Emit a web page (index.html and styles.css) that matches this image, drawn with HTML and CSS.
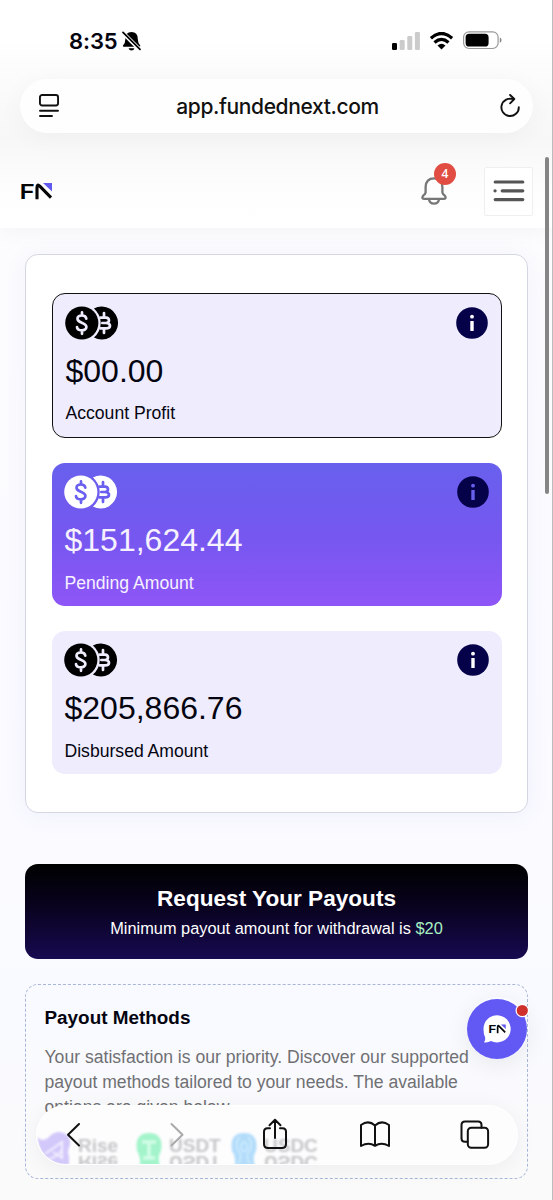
FILE: index.html
```html
<!DOCTYPE html>
<html lang="en">
<head>
<meta charset="utf-8">
<title>FundedNext Payouts</title>
<link rel="stylesheet" href="styles.css">
</head>
<body>
<svg class="defs" width="0" height="0" aria-hidden="true">
  <symbol id="coins" viewBox="0 0 54 34">
    <path d="M28.9 2.4A16.5 16.5 0 1 1 28.9 31.6A19 19 0 0 0 28.9 2.4Z" fill="currentColor"/>
    <circle cx="16.8" cy="17" r="16.6" fill="currentColor"/>
    <path d="M21.3 12.6C20.8 8.5 12.6 8.4 12.5 12.7C12.4 17.3 21.4 16 21.4 21C21.4 25.5 12.2 25.3 12 21M17 6.4V9.5M17 24.5V27.8" class="coin-line"/>
    <path d="M35.5 11.6H41Q44 11.8 44 14.3Q44 17 41 17H37.3M41 17Q45 17.2 45 19.8Q45 22.4 41 22.4H35.5M39 7V11M39 23V27" class="coin-line"/>
  </symbol>
  <symbol id="info" viewBox="0 0 32 32">
    <circle cx="16" cy="16" r="15.8" fill="#06024a"/>
    <circle cx="16" cy="9.7" r="1.9" fill="currentColor"/>
    <rect x="14.3" y="14" width="3.4" height="10" rx=".6" fill="currentColor"/>
  </symbol>
</svg>
<div class="screen">
  <div class="chrome">
    <div class="status">
      <span class="time">8:35</span>
      <svg class="mute" viewBox="0 0 20 20"><path d="M9.5 1Q15.8 1 15.8 8Q15.8 12 18.3 14.5Q18.6 15.8 17 15.8H2Q.4 15.8 1 14.4Q3.4 12 3.4 8Q3.3 1 9.5 1ZM6.6 17.2H12.4Q11.8 19.4 9.5 19.4T6.6 17.2Z"/><path d="M0 .9 18.5 19.4" stroke="#fff" stroke-width="4"/><path d="M1 1.4 18 18.4" stroke="#000" stroke-width="1.7" stroke-linecap="round"/></svg>
      <svg class="signal" viewBox="0 0 28 18"><rect y="11" width="5" height="7" rx="1.3"/><g fill="#cbcbcb"><rect x="7.7" y="8" width="5" height="10" rx="1.3"/><rect x="15.3" y="4" width="5" height="14" rx="1.3"/><rect x="22.9" width="5" height="18" rx="1.3"/></g></svg>
      <svg class="wifi" viewBox="0 0 24 18"><path d="M1.4 6.2Q12-3.2 22.6 6.2M5 10.4Q12 4.4 19 10.4" fill="none" stroke="#000" stroke-width="3.3"/><path d="M8 13.4Q12 10.2 16 13.4L12 17.6Z"/></svg>
      <svg class="battery" viewBox="0 0 39 19"><rect x=".6" y=".8" width="34.5" height="16.7" rx="5.4" fill="none" stroke="#999" stroke-width="1.2"/><rect x="2.6" y="2.8" width="23" height="12.7" rx="3.6"/><path d="M36.8 6.4Q38.6 7 38.6 9.1T36.8 12Z" fill="#888"/></svg>
    </div>
    <div class="address">
      <svg class="reader" viewBox="0 0 20 24"><g fill="none" stroke="#111" stroke-width="1.9" stroke-linecap="round"><rect x=".95" y="1" width="18.1" height="10.5" rx="2.2"/><path d="M1 16.7H19M1 22H13"/></g></svg>
      <span class="host">app.fundednext.com</span>
      <svg class="reload" viewBox="0 0 20 24"><path d="M13.4 5.3A8.7 8.7 0 1 0 18.8 13.2M9.5 4.9H14.2M10.1 1 14.3 5 10.1 9.3" fill="none" stroke="#111" stroke-width="1.9" stroke-linecap="round" stroke-linejoin="round"/></svg>
    </div>
    <div class="appbar">
      <svg class="brand" viewBox="0 0 32 17"><text class="logo-f" transform="translate(-1.5 16) scale(1.3 1)">F</text><path d="M16 16.2V4.6Q16 .4 19 3.4L30 14.6" class="logo-n"/><path d="M22 0H31V8.5Z" class="logo-tip"/></svg>
      <div class="bell"><svg viewBox="0 0 26 28"><g fill="none" stroke="#777" stroke-width="2.3" stroke-linejoin="round"><path d="M13 1.4Q5 1.4 4.6 10V15.5Q4.3 17 2.2 18.6Q.2 21.8 3 21.9H23Q25.8 21.8 23.8 18.6Q21.7 17 21.4 15.5V10Q21 1.4 13 1.4Z"/><path d="M8 22.5Q8.8 26.6 13 26.6T18 22.5"/></g></svg><span class="count">4</span></div>
      <div class="menu"><svg viewBox="0 0 32 22"><g stroke="#555" stroke-width="3.2" stroke-linecap="round"><path d="M2.2 2H29.8M9.2 10.8H29.8M2.2 19.6H29.8M2 10.8H2.1"/></g></svg></div>
    </div>
  </div>
  <main>
    <section class="balances">
      <article class="card outlined"><div class="top"><svg class="coins"><use href="#coins"/></svg><svg class="info"><use href="#info"/></svg></div><div class="amount">$00.00</div><div class="label">Account Profit</div></article>
      <article class="card pending"><div class="top"><svg class="coins"><use href="#coins"/></svg><svg class="info"><use href="#info"/></svg></div><div class="amount">$151,624.44</div><div class="label">Pending Amount</div></article>
      <article class="card"><div class="top"><svg class="coins"><use href="#coins"/></svg><svg class="info"><use href="#info"/></svg></div><div class="amount">$205,866.76</div><div class="label">Disbursed Amount</div></article>
    </section>
    <section class="request"><h1>Request Your Payouts</h1><p>Minimum payout amount for withdrawal is <span>$20</span></p></section>
    <section class="methods"><h2>Payout Methods</h2><p>Your satisfaction is our priority. Discover our supported<br>payout methods tailored to your needs. The available<br>options are given below</p></section>
  </main>
  <div class="scrollbar"></div>
  <div class="chat"><svg viewBox="0 0 62 62"><circle cx="30" cy="32" r="30" fill="#6259f5"/><path d="M16.5 32A13.6 13.6 0 1 1 24 44Q20 46 17 45.2Q18.8 43 18 40Q16.5 37 16.5 32Z" fill="#fff"/><g transform="translate(22 27.5) scale(.54)"><text class="logo-f" transform="translate(-1.5 16) scale(1.3 1)">F</text><path d="M16 16.2V4.6Q16 .4 19 3.4L30 14.6" class="logo-n"/><path d="M22 0H31V8.5Z" class="logo-tip"/></g><circle cx="55.3" cy="13.5" r="6.2" fill="#cf302b" stroke="#fff" stroke-width="1.2"/></svg></div>
  <nav class="toolbar">
    <div class="glass">
      <svg class="ghost rise" viewBox="0 0 34 34"><path d="M0 6Q6 12 12 6Q16 1 23 1Q34 3 33 14Q30 20 32 26V34H16Q4 28 0 6Z" fill="#d3c8fa"/><path d="M8 23 25 11V27L16 21M10 28Q18 28 25 19" fill="none" stroke="#f3efff" stroke-width="2"/></svg>
      <div class="ghost name rise-name">Rise</div>
      <svg class="ghost tether" viewBox="0 0 28 34"><path d="M5 34Q6 25 2 19Q-1 1 14 1Q29 1 26 19Q22 25 25 34Z" fill="#a3f4cb"/><path d="M7 10H21M14 10V26M8 26H20" stroke="#d3fce8" stroke-width="3.5"/></svg>
      <div class="ghost name usdt-name">USDT</div>
      <svg class="ghost coin" viewBox="0 0 28 34"><path d="M5 34Q6 25 2 19Q-1 1 14 1Q29 1 26 19Q22 25 25 34Z" fill="#b2dcfa"/><path d="M10 5Q3 12 10 21Q12 26 8 32M18 5Q25 12 18 21Q16 26 20 32M14 9Q8 15 14 20Q21 15 14 9" fill="none" stroke="#c9e9fd" stroke-width="2"/></svg>
      <div class="ghost name usdc-name">USDC</div>
    </div>
    <svg class="tools" viewBox="0 0 482 60"><g fill="none" stroke="#111" stroke-width="2" stroke-linecap="round" stroke-linejoin="round"><path d="M43 19 32 29.7 43 40.5"/><path d="M135.5 19 146.5 29.7 135.5 40.5" stroke="#aaa"/><path d="M234 23.3H231.5Q228 23.3 228 26.8V39Q228 43 232 43H246Q250 43 250 39V26.8Q250 23.3 246.5 23.3H244M239 33V15M233.5 20.2 239 14.7 244.5 20.2"/><path d="M339 20.5Q332.5 14.5 325 20V41Q332.5 36.5 339 40.8Q345.5 36.5 353 41V20Q345.5 14.5 339 20.5ZM339 20.5V40.8"/><path d="M431.5 36.7H429Q425.5 36.7 425.5 33.2V20Q425.5 16.5 429 16.5H442Q445.5 16.5 445.5 20V22.7"/><rect x="431.8" y="22.7" width="20.3" height="20" rx="3.5"/></g></svg>
  </nav>
</div>
</body>
</html>
```
FILE: styles.css
```css
* { box-sizing: border-box; }
body { margin: 0; font-family: "Liberation Sans", Arial, sans-serif; color: #050511; }
svg { display: block; }
.defs { position: absolute; }
.screen { position: relative; width: 553px; height: 1200px; overflow: hidden; border-right: 1px solid #bdbdbf; background: linear-gradient(#fdfdfd, #fbfbff 50%, #f9faff 85%, #fafafa); }
.chrome { height: 228px; background: linear-gradient(#fff 0 18%, #fcfcfc 32%, #f7f7f7 60%, #fdfdfd 82%, #fff); box-shadow: 0 3px 20px #0000000a; }
.status { height: 79px; display: flex; align-items: flex-start; padding: 31px 50px 0 69px; }
.time { font: 600 22px/21px Inter, sans-serif; width: 48px; letter-spacing: -.1px; }
.mute { width: 20px; height: 20px; margin-left: 5px; }
.signal { width: 28px; height: 18px; margin: 1px 9px 0 auto; }
.wifi { width: 25px; height: 18px; margin: 1px 9px 0 0; }
.battery { width: 39px; height: 19px; }
.address { height: 54px; margin: 0 19px 0 20px; border-radius: 27px; background: #fefefe; box-shadow: 0 4px 26px #0000000a; display: flex; align-items: center; justify-content: space-between; padding: 0 13px 0 19px; }
.reader { width: 20px; height: 24px; }
.host { font: 450 21px/28px Inter, sans-serif; color: #111; letter-spacing: -.38px; position: relative; left: -2px; top: 1px; }
.reload { width: 20px; height: 24px; }
.appbar { height: 95px; display: flex; align-items: center; padding: 21px 19px 0 21px; }
.brand { width: 32px; height: 17px; margin-right: auto; overflow: visible; }
.logo-f { font: 600 20px Inter, sans-serif; fill: #050505; }
.logo-n { fill: none; stroke: #050505; stroke-width: 3.1; }
.logo-tip { fill: #6259f0; }
.bell { position: relative; width: 26px; margin-right: 37px; }
.bell svg { width: 26px; height: 28px; }
.count { position: absolute; left: 13px; top: -14px; width: 22px; height: 22px; border-radius: 50%; background: #e14d42; color: #fff; font: 600 12px/22px "Open Sans", sans-serif; text-align: center; }
.menu { width: 49px; height: 49px; border: 1px solid #efefef; background: #fff; border-radius: 2px; display: grid; place-items: center; }
.menu svg { width: 32px; height: 22px; }
main { padding: 26px 25px 0; display: flex; flex-direction: column; width: 553px; }
.balances { width: 503px; height: 559px; padding: 37.5px 25.5px 0; border: 1px solid #d4d7e2; border-radius: 13px; background: #fff; box-shadow: 0 2px 24px #5064d010; display: flex; flex-direction: column; gap: 25px; }
.card { --face: #efedfd; height: 143px; border-radius: 13px; background: var(--face); padding: 12px 13px 12px 12.5px; }
.outlined { height: 145.5px; border: 1.5px solid #111; }
.pending { --face: #6a5fef; color: #f6f1ff; background: linear-gradient(#6860ed, #7657f0 52%, #8f55f7); }
.top { display: flex; justify-content: space-between; }
.coins { width: 54px; height: 34px; color: #000; }
.coin-line { fill: none; stroke: var(--face); stroke-width: 2.7; stroke-linecap: round; stroke-linejoin: round; }
.info { width: 32px; height: 32px; color: #fff; margin-top: 1px; }
.pending .coins { color: #fff; }
.pending .info { color: #6860ed; }
.amount { font-size: 32px; line-height: 38px; margin-top: 12px; padding-left: .5px; }
.label { font-size: 17.6px; line-height: 22px; margin-top: 12.5px; padding-left: .5px; }
.request { width: 503px; height: 95px; margin-top: 51px; border-radius: 13px; color: #fff; text-align: center; background: linear-gradient(#000, #09031f 45%, #170a51); padding-top: 20px; }
.request h1 { font-size: 22.6px; line-height: 29px; margin: 0; }
.request p { font-size: 16.35px; line-height: 22px; margin: 4px 0 0; }
.request span { color: #a9efc2; }
.methods { width: 503px; height: 195px; margin-top: 25px; border: 1px dashed #a8b6d7; border-radius: 13px; padding: 21px 18.5px; }
.methods h2 { font-size: 18.9px; line-height: 24px; margin: 0; }
.methods p { font-size: 17.6px; line-height: 25px; margin: 15px 0 0; color: #707074; white-space: nowrap; }
.scrollbar { position: absolute; left: 545px; top: 157px; width: 4px; height: 337px; border-radius: 2px; background: #858585; }
.chat { position: absolute; left: 467px; top: 997px; width: 62px; height: 62px; border-radius: 50%; box-shadow: 0 5px 24px #00000012; }
.toolbar { position: absolute; left: 36px; top: 1105px; width: 482px; height: 60px; border-radius: 30px; box-shadow: 0 4px 22px #0000000e; background: #fdfdfe; }
.glass { position: absolute; inset: 0; overflow: hidden; border-radius: 30px; border: 1px solid #fff; }
.tools { position: absolute; inset: 0; width: 482px; height: 60px; }
.ghost { position: absolute; filter: blur(1px); }
.rise { left: 0; top: 25px; width: 34px; height: 34px; }
.name { top: 28px; color: #c6c6c8; font-size: 19px; line-height: 24px; font-weight: 700; filter: blur(1.1px); -webkit-box-reflect: below -8px; }
.rise-name { left: 41px; }
.usdt-name { left: 132px; }
.usdc-name { left: 227px; }
.tether, .coin { top: 26px; width: 28px; height: 34px; }
.tether { left: 98px; }
.coin { left: 193px; }
```
